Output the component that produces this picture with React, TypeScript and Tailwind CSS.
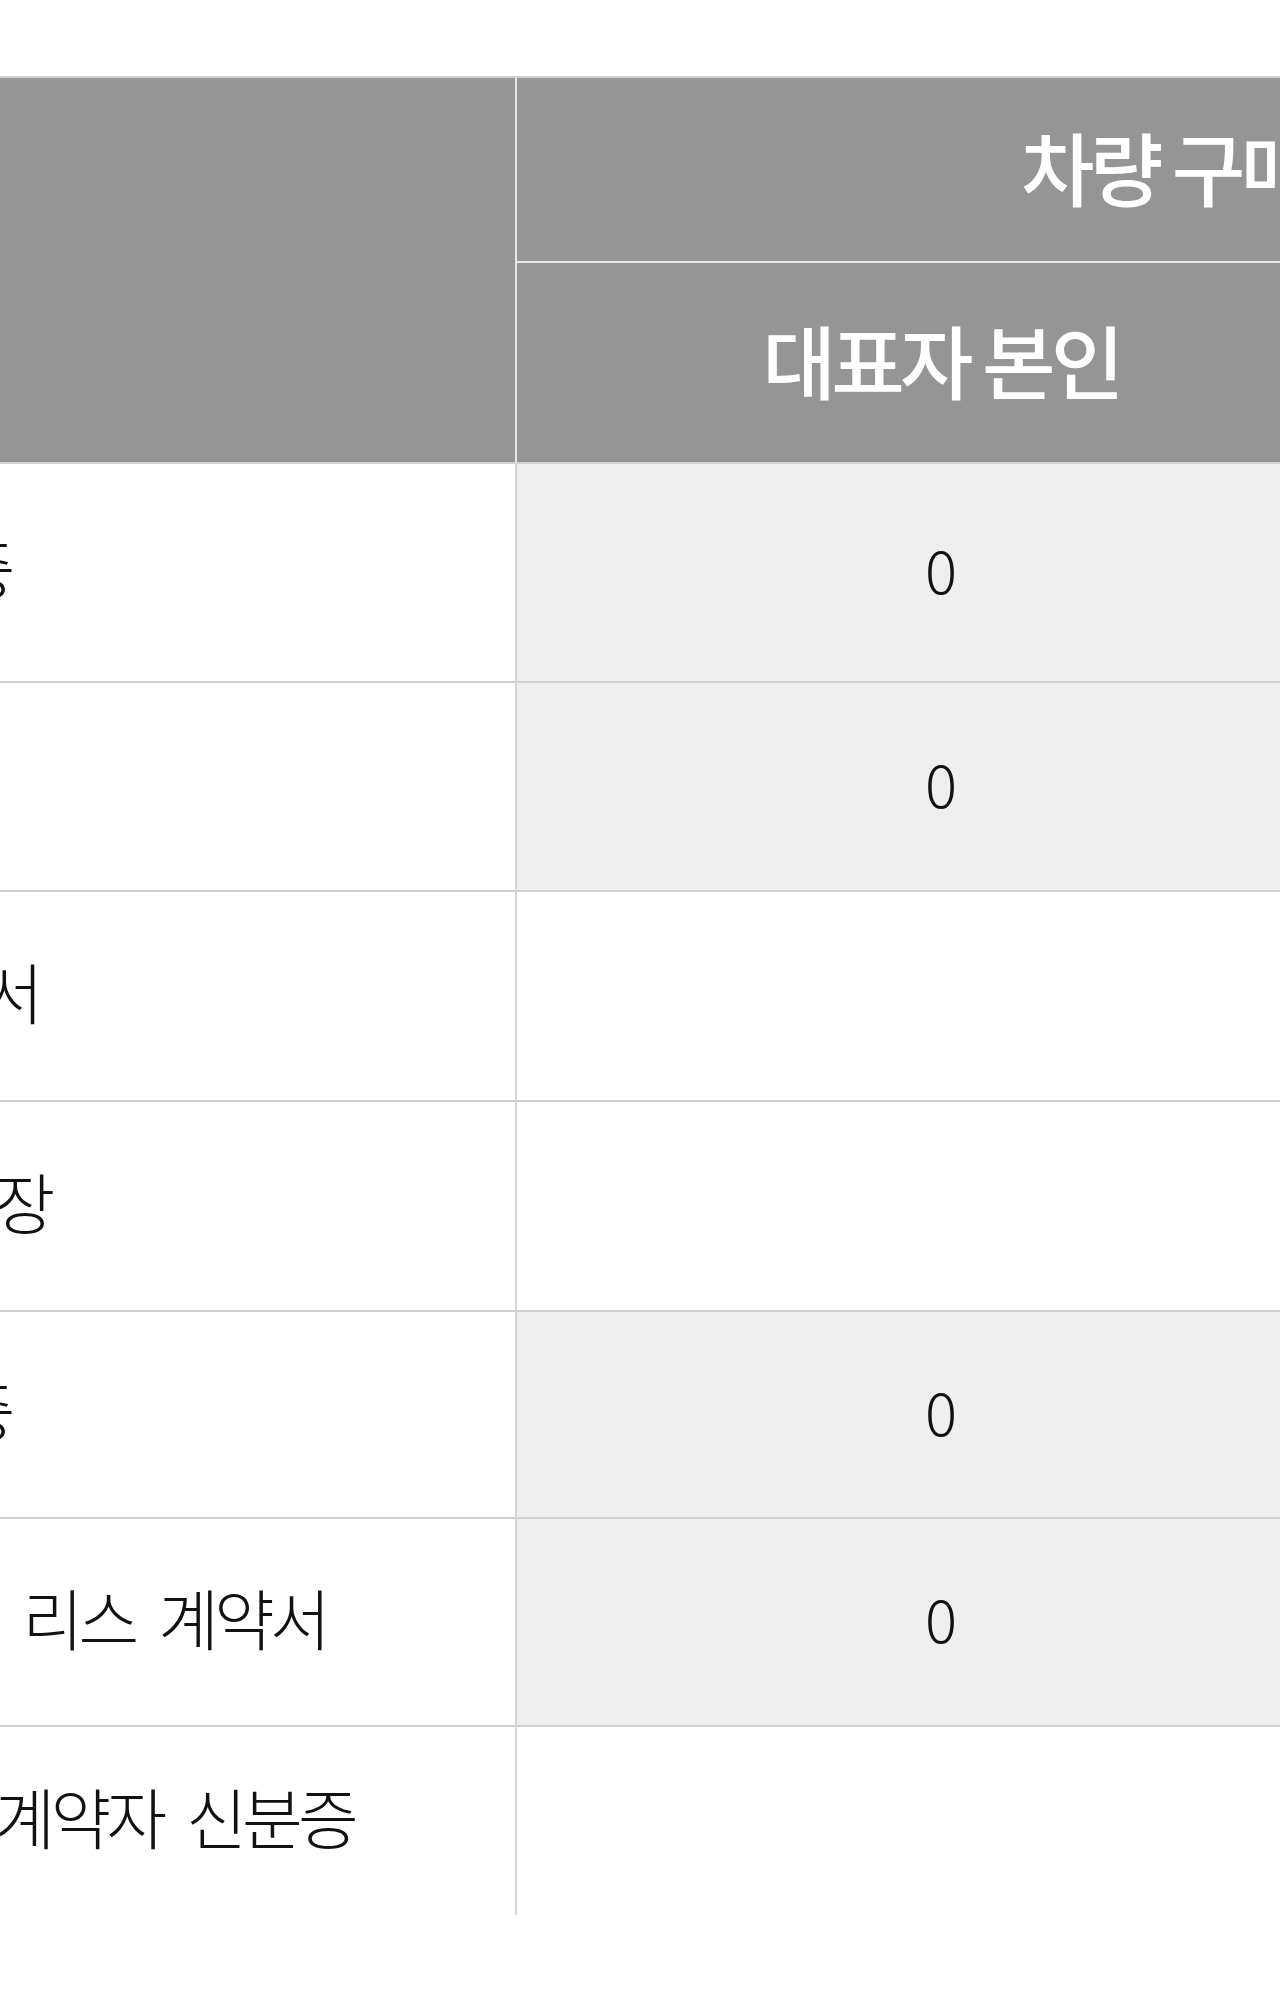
const headerCell =
  "flex items-center justify-center bg-[#959595] pb-[10px] text-[80px] font-medium tracking-[-4.8px] text-white";

const rows = [
  { label: "사업자 등록증", mark: "0", height: "h-[219px]" },
  { label: "등기부등본", mark: "0", height: "h-[209px]" },
  { label: "법인 인감증명서", mark: "", height: "h-[210px]" },
  { label: "법인인감 및 도장", mark: "", height: "h-[210px]" },
  { label: "대표자 신분증", mark: "0", height: "h-[207px]" },
  { label: "운용리스이용시 법인차량\u00a0 리스 계약서", mark: "0", height: "h-[208px]" },
  { label: "운용리스 이용시 법인리스 계약자 신분증", mark: "", height: "h-[188px]" },
];

export default function App() {
  return (
    <div
      className="w-full overflow-hidden bg-white pt-[76px] pb-[85px]"
      style={{ fontFamily: '"Noto Sans CJK KR", "Noto Sans", sans-serif' }}
    >
      <div className="-ml-[853px] w-[3068px]">
        {/* header */}
        <div className="flex border-t-2 border-[#cfcfcf]">
          <div className={`${headerCell} h-[386px] w-[1368px] border-b-2 border-[#d4d4d4]`} />
          <div className="flex w-[1700px] flex-col">
            <div className={`${headerCell} h-[185px] border-b-2 border-l-2 border-[#e9e9e9] pr-[18px]`}>
              차량 구매 시 제출 서류
            </div>
            <div className="flex">
              <div
                className={`${headerCell} h-[201px] w-[850px] border-b-2 border-l-2 border-[#e9e9e9] border-b-[#d4d4d4]`}
              >
                대표자 본인
              </div>
              <div
                className={`${headerCell} h-[201px] w-[850px] border-b-2 border-l-2 border-[#e9e9e9] border-b-[#d4d4d4]`}
              >
                임직원
              </div>
            </div>
          </div>
        </div>

        {/* body */}
        {rows.map((row, index) => {
          const isLast = index === rows.length - 1;
          const border = isLast ? "" : "border-b-2 border-[#cfcfcf]";

          return (
            <div key={row.label} className={`flex ${row.height}`}>
              <div
                className={`flex w-[1368px] items-center justify-center whitespace-nowrap pb-[12px] text-[66px] font-light tracking-[-4.8px] text-[#111] [word-spacing:14px] ${border}`}
              >
                {row.label}
              </div>
              <div
                className={`flex w-[850px] items-center justify-center border-l-2 border-l-[#d6d6d6] pb-[10px] text-[60px] font-light text-[#111] ${border} ${
                  row.mark ? "bg-[#efefef]" : "bg-white"
                }`}
              >
                {row.mark}
              </div>
              <div
                className={`flex w-[850px] items-center justify-center border-l-2 border-l-[#d6d6d6] pb-[10px] text-[60px] font-light text-[#111] ${border}`}
              >
                {row.mark}
              </div>
            </div>
          );
        })}
      </div>
    </div>
  );
}
